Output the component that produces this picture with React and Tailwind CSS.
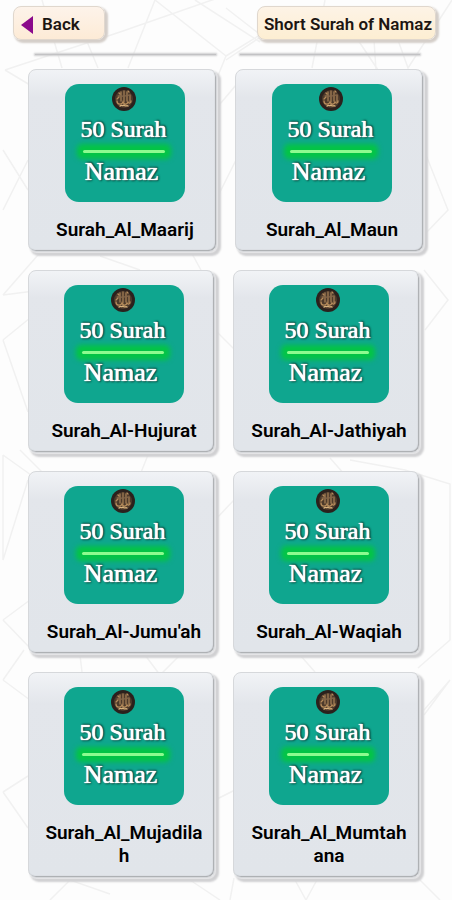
import clsx from 'clsx';

const topRow = ['Surah_Al_Maarij', 'Surah_Al_Maun'];

const otherRows = [
    ['Surah_Al-Hujurat', 'Surah_Al-Jathiyah'],
    ["Surah_Al-Jumu'ah", 'Surah_Al-Waqiah'],
    ['Surah_Al_Mujadilah', 'Surah_Al_Mumtahana'],
];

const Background = () => (
    <svg
        className="absolute inset-0 h-full w-full"
        viewBox="0 0 452 900"
        preserveAspectRatio="none"
        fill="none"
        stroke="#f1f1f1"
        strokeWidth="1.5"
        aria-hidden="true"
    >
        <path d="M5 70 L120 32 L235 -8 M5 70 L30 85 M42 0 L62 68 M78 20 L98 68 M155 0 L128 68 M155 0 L226 56 L200 120 M226 56 L300 10 M195 0 L260 42" />
        <path d="M226 8 L262 36 L226 60 M325 0 L312 68 M358 40 L378 70 M374 40 L376 70 M398 40 L408 68 L452 0 M424 150 L448 210 L424 235" />
        <path d="M3 295 L38 255 M3 295 L42 290 M3 340 L30 318 M3 340 L28 412 M100 256 L140 270 M190 250 L202 272 M215 330 L235 350 M424 270 L448 300 L425 330" />
        <path d="M3 455 L38 480 M3 455 L3 560 L28 480 M20 450 L42 472 M150 450 L140 475 M215 520 L234 500 M350 460 L405 470 L450 484 L450 640 L418 668 M330 458 L345 475" />
        <path d="M3 620 L30 600 M3 620 L30 648 M3 680 L24 650 M3 680 L30 700 M80 655 L82 672 M145 655 L160 675 L180 655 M300 655 L315 672 M424 710 L450 680 L424 715" />
        <path d="M3 792 L28 776 M3 792 L28 828 M215 800 L235 790 M50 900 L70 880 L110 894 M190 880 L220 900 M230 900 L234 878 M295 880 L306 900 L318 878 M420 880 L440 900" />
        <path d="M3 210 L28 160 M3 150 L28 190 M215 110 L236 85 M216 200 L236 160" />
    </svg>
);

// Small round calligraphy medallion
const Medallion = () => (
    <svg className="h-6 w-6" viewBox="0 0 24 24" fill="none" aria-hidden="true">
        <circle cx="12" cy="12" r="12" fill="#2b211d" />
        <circle cx="12" cy="12" r="9" fill="#4d3a2b" />
        <g stroke="#b58b5b" strokeWidth="1.3" strokeLinecap="round">
            <path d="M9 5v9M12 4v11M15 5v9M18 8v7" stroke="#a07c54" />
            <path d="M6 9c2-1 3 1 5 0s3 1 6-1" stroke="#84664a" />
            <path d="M5 14c0 4 5 4 6 1 1 3 4 3 5 0 1 2 3 1 3-1" />
            <path d="M8 19c2-2 3 1 4-1 1 2 3 0 4 1" stroke="#d9b27c" />
            <path d="M5 12l2-2M7 6l1 1M16 4l1 1" />
        </g>
    </svg>
);

const Cover = () => (
    <div className="flex h-[118px] w-[120px] flex-col items-center rounded-[14px] bg-[#0fa68f] pr-[3px] font-['Liberation_Serif',serif] text-white [text-shadow:0_0_1px_#fff,0_0_1px_#fff,1px_-1px_2px_#00352c,1px_1px_2px_#00352c]">
        <div className="mt-[3px]">
            <Medallion />
        </div>
        <div className="mt-1 text-[24px] leading-7">50 Surah</div>
        <div className="my-[7px] h-[3px] w-[82px] rounded-xs bg-[#8dfb8f] shadow-[0_0_5px_6px_#04c545]" />
        <div className="relative pr-1 text-[26px] leading-6">Namaz</div>
    </div>
);

const SurahCard = ({ name }) => (
    <button
        type="button"
        className="flex flex-col items-center rounded-lg border border-[#d6d8db] bg-linear-to-b from-[#f1f3f6] via-[#e3e6eb] via-15% to-[#e1e5ea] pt-[14px] pr-[9px] pb-[10px] pl-[14px] shadow-[inset_-1px_-1px_1px_#a9abae,1px_1px_1px_#e6e6e8,3px_3px_2px_1px_#d0d0d2]"
    >
        <Cover />
        <span className="mt-4 w-full text-center text-[19px] leading-[23px] font-semibold break-all text-black">
            {name}
        </span>
    </button>
);

const CardRow = ({ names, wide }) => (
    <div className={clsx('grid grid-cols-2 gap-[18px] pl-7', wide ? 'pr-7' : 'pr-8')}>
        {names.map((name) => (
            <SurahCard key={name} name={name} />
        ))}
    </div>
);

const App = () => {
    return (
        <div className="relative min-h-screen overflow-hidden bg-[#fdfdfd] font-[Roboto,sans-serif]">
            <Background />
            <div className="relative">
                <header className="flex items-start justify-between pt-[6px] pr-4 pl-[13px] text-[17px] font-semibold text-[#1c1512]">
                    <button
                        type="button"
                        className="flex h-[34px] w-[92px] items-center gap-[9px] rounded-lg border border-[#e0d7cd] bg-linear-to-b from-[#fdf3ea] to-[#fdebd6] pt-1 pl-[7px] shadow-[2px_2px_2px_1px_#d4cec9]"
                    >
                        <svg className="h-[18px] w-3" viewBox="0 0 12 18" fill="#8b0a8b" aria-hidden="true">
                            <path d="M0 9L12 0V18z" />
                        </svg>
                        Back
                    </button>
                    <h1 className="flex h-[34px] items-center rounded-lg border border-[#e0d7cd] bg-linear-to-b from-[#fdf3e6] to-[#fdeed2] pt-1 pr-[3px] pl-[6px] shadow-[2px_2px_2px_1px_#d4cec9]">
                        Short Surah of Namaz
                    </h1>
                </header>
                {/* Bottom edge of the row scrolled under the header */}
                <div className="mt-[14px] grid grid-cols-2 gap-6 pr-8 pl-[35px]">
                    <div className="h-px bg-[#c2c2c4] shadow-[0_0_2px_1px_#cdcdcf]" />
                    <div className="h-px bg-[#c2c2c4] shadow-[0_0_2px_1px_#cdcdcf]" />
                </div>
                <main className="mt-[14px] flex flex-col gap-[18px] pb-5">
                    <CardRow names={topRow} wide />
                    {otherRows.map((names) => (
                        <CardRow key={names[0]} names={names} />
                    ))}
                </main>
            </div>
        </div>
    );
};

export default App;
